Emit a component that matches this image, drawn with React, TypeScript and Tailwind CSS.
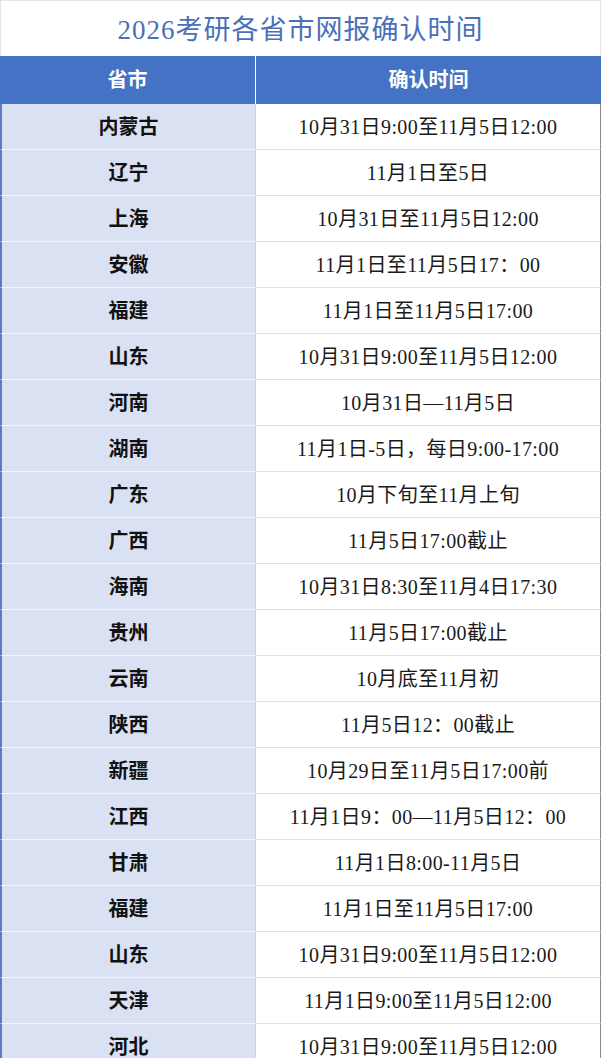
import React from "react";

const rows: [string, string][] = [
  ["内蒙古", "10月31日9:00至11月5日12:00"],
  ["辽宁", "11月1日至5日"],
  ["上海", "10月31日至11月5日12:00"],
  ["安徽", "11月1日至11月5日17：00"],
  ["福建", "11月1日至11月5日17:00"],
  ["山东", "10月31日9:00至11月5日12:00"],
  ["河南", "10月31日—11月5日"],
  ["湖南", "11月1日-5日，每日9:00-17:00"],
  ["广东", "10月下旬至11月上旬"],
  ["广西", "11月5日17:00截止"],
  ["海南", "10月31日8:30至11月4日17:30"],
  ["贵州", "11月5日17:00截止"],
  ["云南", "10月底至11月初"],
  ["陕西", "11月5日12：00截止"],
  ["新疆", "10月29日至11月5日17:00前"],
  ["江西", "11月1日9：00—11月5日12：00"],
  ["甘肃", "11月1日8:00-11月5日"],
  ["福建", "11月1日至11月5日17:00"],
  ["山东", "10月31日9:00至11月5日12:00"],
  ["天津", "11月1日9:00至11月5日12:00"],
  ["河北", "10月31日9:00至11月5日12:00"],
];

export default function App() {
  return (
    <div className="w-[601px] h-[1058px] overflow-hidden bg-white font-['Liberation_Serif','Noto_Sans_CJK_SC',serif]">
      <div className="h-[56px] pt-[3px] border-t border-l border-r border-[#e6e6e6] flex items-center justify-center text-[27px] text-[#4a70b8] tracking-[1px]">
        2026考研各省市网报确认时间
      </div>
      <div className="flex h-[48px] text-white text-[20px] font-bold">
        <div className="w-[255px] bg-[#4472c4] flex items-center justify-center">省市</div>
        <div className="w-[1px] bg-white" />
        <div className="flex-1 bg-[#4472c4] flex items-center justify-center">确认时间</div>
      </div>
      <div className="flex flex-col">
        {rows.map(([p, t], i) => (
          <div key={i} className="flex h-[46px] shrink-0">
            <div className="w-[256px] bg-[#d9e1f2] border-l-2 border-l-[#5b7cc4] border-r border-r-[#c9d2ea] border-b border-b-[#f2f4fb] flex items-center justify-center text-[20px] font-bold text-[#111]">
              {p}
            </div>
            <div className="flex-1 bg-white border-b border-b-[#e2e2e2] border-r border-r-[#8a8a8a] flex items-center justify-center text-[20px] tracking-[0.4px] text-[#1a1a1a]">
              {t}
            </div>
          </div>
        ))}
      </div>
    </div>
  );
}
